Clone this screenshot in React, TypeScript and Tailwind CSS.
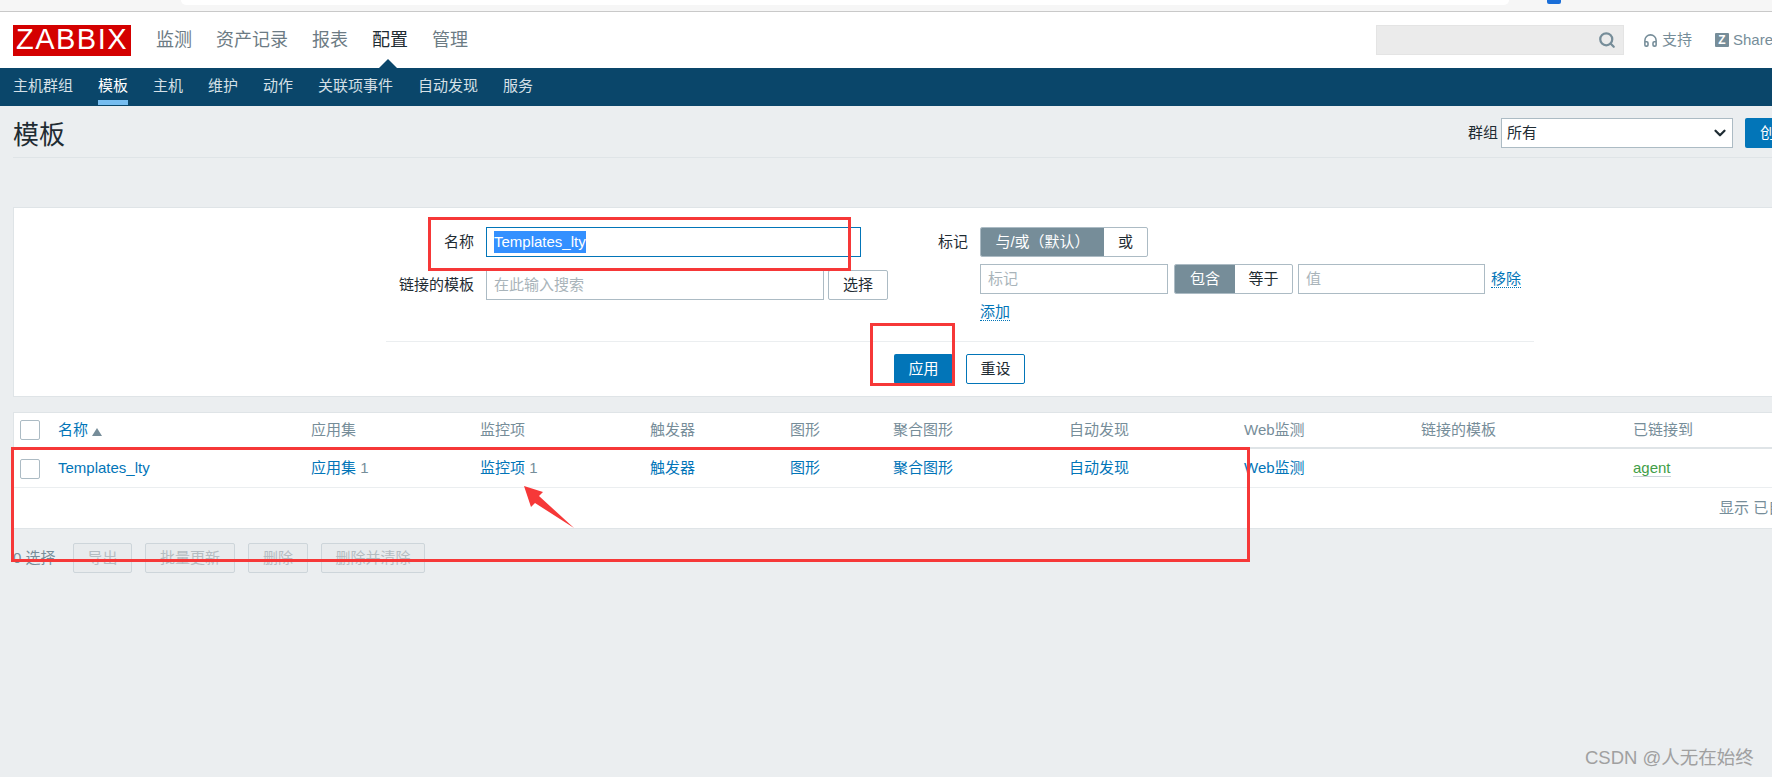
import { ChevronDown, Headphones, Search } from 'lucide-react';

const mainNav = ['监测', '资产记录', '报表', '配置', '管理'];
const subNav = ['主机群组', '模板', '主机', '维护', '动作', '关联项事件', '自动发现', '服务'];

const COLS = 'grid grid-cols-[44px_253px_169px_170px_140px_103px_176px_175px_177px_212px_1fr]';

function Checkbox() {
  return <span className="ml-[6px] block size-[20px] rounded-[2px] border border-[#acbbc4] bg-white" />;
}

function Field({ className, placeholder }: { className: string; placeholder: string }) {
  return (
    <div className={`flex h-[30px] items-center border border-[#acbbc4] bg-white pl-[7px] text-[#a9b4ba] ${className}`}>
      {placeholder}
    </div>
  );
}

function DisabledButton({ label, className }: { label: string; className: string }) {
  return (
    <button className={`h-[30px] rounded-[2px] border border-[#cdd5da] bg-[#e8ebed] text-[#b4bcc1] ${className}`}>
      {label}
    </button>
  );
}

function DottedLink({ label }: { label: string }) {
  return <a className="border-b border-dotted border-[#0275b8] leading-[20px] text-[#0275b8]">{label}</a>;
}

export default function App() {
  return (
    <div
      className="relative h-[777px] w-[1772px] overflow-hidden bg-[#ebeef0] text-[15px] text-[#1f2c33]"
      style={{ fontFamily: '"Liberation Sans", "Noto Sans CJK SC", sans-serif' }}
    >
      {/* browser chrome leftover */}
      <div className="relative h-[12px] border-b border-[#c9c9c9] bg-[#f6f6f6]">
        <div className="absolute left-[181px] top-0 h-[5px] w-[1328px] rounded-b-[6px] bg-white" />
        <div className="absolute left-[1547px] top-0 h-[4px] w-[14px] rounded-b-[2px] bg-[#1a6ed8]" />
      </div>

      {/* top nav */}
      <header className="relative flex h-[56px] items-center bg-white pl-[13px]">
        <div className="flex h-[31px] w-[118px] items-center justify-center bg-[#d40000] text-[29px] font-normal tracking-[1.5px] text-white">
          ZABBIX
        </div>
        <nav className="ml-[25px] flex gap-[24px] text-[18px] text-[#6c7b84]">
          {mainNav.map((item) => (
            <a key={item} className={item === '配置' ? 'text-[#1f2c33]' : ''}>
              {item}
            </a>
          ))}
        </nav>
        <div className="absolute bottom-0 left-[379px] size-0 border-x-[9px] border-b-[9px] border-x-transparent border-b-[#0a466a]" />
        <div className="ml-auto flex items-center text-[15px] text-[#768d99]">
          <div className="flex h-[30px] w-[248px] items-center justify-end border border-[#e4e4e4] bg-[#ebebeb] pr-[7px]">
            <Search className="size-[18px]" strokeWidth={3} />
          </div>
          <a className="ml-[19px] flex w-[72px] items-center gap-[4px]">
            <Headphones className="size-[15px]" strokeWidth={2.5} />
            支持
          </a>
          <a className="flex w-[57px] items-center gap-[4px]">
            <span className="flex size-[14px] shrink-0 items-center justify-center rounded-[1px] bg-[#768d99] text-[12px] font-bold leading-none text-white">
              Z
            </span>
            Share
          </a>
        </div>
      </header>

      {/* sub nav */}
      <nav className="flex h-[38px] gap-[25px] bg-[#0a466a] pl-[13px] text-[#d5e0e7]">
        {subNav.map((item) => (
          <a
            key={item}
            className={
              item === '模板'
                ? 'mb-px flex items-center border-b-[5px] border-[#76bdf0] pt-[5px] text-white'
                : 'flex items-center pb-px'
            }
          >
            {item}
          </a>
        ))}
      </nav>

      <main className="w-[1840px] pl-[13px]">
        {/* title */}
        <div className="flex h-[52px] items-start justify-between border-b border-[#dfe4e7]">
          <h1 className="mt-[11px] text-[26px] leading-[36px] font-normal">模板</h1>
          <div className="mt-[12px] flex items-center">
            <span>群组</span>
            <div className="relative ml-[3px]">
              <select className="h-[30px] w-[232px] appearance-none border border-[#acbbc4] bg-white pl-[5px] outline-none">
                <option>所有</option>
              </select>
              <ChevronDown className="absolute right-[4px] top-[6px] size-[18px]" strokeWidth={3} />
            </div>
            <button className="ml-[12px] h-[30px] w-[95px] rounded-[2px] bg-[#0275b8] pl-[15px] text-left text-white">
              创建模板
            </button>
          </div>
        </div>

        {/* filter */}
        <section className="mt-[49px] h-[190px] border border-[#dfe4e7] bg-white pt-[19px]">
          <div className="flex h-[114px]">
            <div className="ml-[370px] grid w-[503px] grid-cols-[90px_1fr] content-start gap-x-[12px] gap-y-[13px]">
              <label className="text-right leading-[30px]">名称</label>
              <div className="flex h-[30px] w-[375px] items-center border border-[#0275b8] pl-[7px]">
                <span className="bg-[#3390ff] text-white">Templates_lty</span>
              </div>
              <label className="whitespace-nowrap text-right leading-[30px]">链接的模板</label>
              <div className="flex gap-[4px]">
                <Field className="w-[338px]" placeholder="在此输入搜索" />
                <button className="h-[30px] w-[60px] rounded-[2px] border border-[#acbbc4] bg-white">选择</button>
              </div>
            </div>
            <div className="ml-[51px] flex gap-[12px]">
              <label className="leading-[30px]">标记</label>
              <div className="flex flex-col items-start">
                <div className="flex h-[30px] w-[168px] overflow-hidden rounded-[2px] border border-[#acbbc4]">
                  <span className="flex w-[123px] items-center justify-center bg-[#768d99] text-white">与/或（默认）</span>
                  <span className="flex flex-1 items-center justify-center">或</span>
                </div>
                <div className="mt-[7px] flex items-center">
                  <Field className="w-[188px]" placeholder="标记" />
                  <div className="ml-[6px] flex h-[30px] w-[119px] overflow-hidden rounded-[2px] border border-[#acbbc4]">
                    <span className="flex w-[60px] items-center justify-center bg-[#768d99] text-white">包含</span>
                    <span className="flex flex-1 items-center justify-center">等于</span>
                  </div>
                  <Field className="ml-[5px] w-[187px]" placeholder="值" />
                  <span className="ml-[6px]">
                    <DottedLink label="移除" />
                  </span>
                </div>
                <div className="mt-[7px]">
                  <DottedLink label="添加" />
                </div>
              </div>
            </div>
          </div>
          <div className="ml-[372px] w-[1148px] border-t border-[#ebeef0]" />
          <div className="ml-[880px] mt-[12px] flex gap-[13px]">
            <button className="h-[30px] w-[59px] rounded-[2px] bg-[#0275b8] text-white">应用</button>
            <button className="h-[30px] w-[59px] rounded-[2px] border border-[#0275b8] bg-white">重设</button>
          </div>
        </section>

        {/* table */}
        <section className="mt-[15px] border border-[#dfe4e7] bg-white">
          <div className={`${COLS} h-[36px] items-center border-b-2 border-[#dfe4e7] text-[#768d99]`}>
            <Checkbox />
            <a className="flex items-center gap-[4px] text-[#0275b8]">
              名称
              <span className="mt-[3px] size-0 border-x-[5px] border-b-[8px] border-x-transparent border-b-[#768d99]" />
            </a>
            <span>应用集</span>
            <span>监控项</span>
            <span>触发器</span>
            <span>图形</span>
            <span>聚合图形</span>
            <span>自动发现</span>
            <span>Web监测</span>
            <span>链接的模板</span>
            <span>已链接到</span>
          </div>
          <div className={`${COLS} h-[39px] items-center border-b border-[#ebeef0] pt-px text-[#0275b8]`}>
            <Checkbox />
            <a>Templates_lty</a>
            <span>
              应用集 <span className="text-[#768d99]">1</span>
            </span>
            <span>
              监控项 <span className="text-[#768d99]">1</span>
            </span>
            <a>触发器</a>
            <a>图形</a>
            <a>聚合图形</a>
            <a>自动发现</a>
            <a>Web监测</a>
            <span />
            <span>
              <a className="border-b border-[#c9d3d9] text-[#429e47]">agent</a>
            </span>
          </div>
          <div className="flex h-[40px] items-center justify-end text-[#768d99]">
            <span className="w-[120px] overflow-hidden whitespace-nowrap">显示 已自动发现的 1</span>
          </div>
        </section>

        {/* bulk actions */}
        <div className="mt-[14px] flex items-center text-[#768d99]">
          <span className="w-[60px]">0 选择</span>
          <div className="flex gap-[13px]">
            <DisabledButton label="导出" className="w-[59px]" />
            <DisabledButton label="批量更新" className="w-[90px]" />
            <DisabledButton label="删除" className="w-[60px]" />
            <DisabledButton label="删除并清除" className="w-[104px]" />
          </div>
        </div>
      </main>

      {/* screenshot annotations */}
      <div className="absolute left-[428px] top-[217px] h-[54px] w-[423px] border-[3px] border-[#f63838]" />
      <div className="absolute left-[870px] top-[323px] h-[63px] w-[85px] border-[3px] border-[#f63838]" />
      <div className="absolute left-[11px] top-[447px] h-[115px] w-[1239px] border-[3px] border-[#f63838]" />
      <svg className="absolute left-[520px] top-[483px]" width="60" height="48" viewBox="0 0 60 48">
        <path d="M4 3 L23 9 L19 13 L54 45 L15 20 L11 24 Z" fill="#f63838" />
      </svg>

      <div className="absolute left-[1585px] top-[746px] text-[18.5px] leading-[24px] text-[#a0a0a0]">CSDN @人无在始终</div>
    </div>
  );
}
